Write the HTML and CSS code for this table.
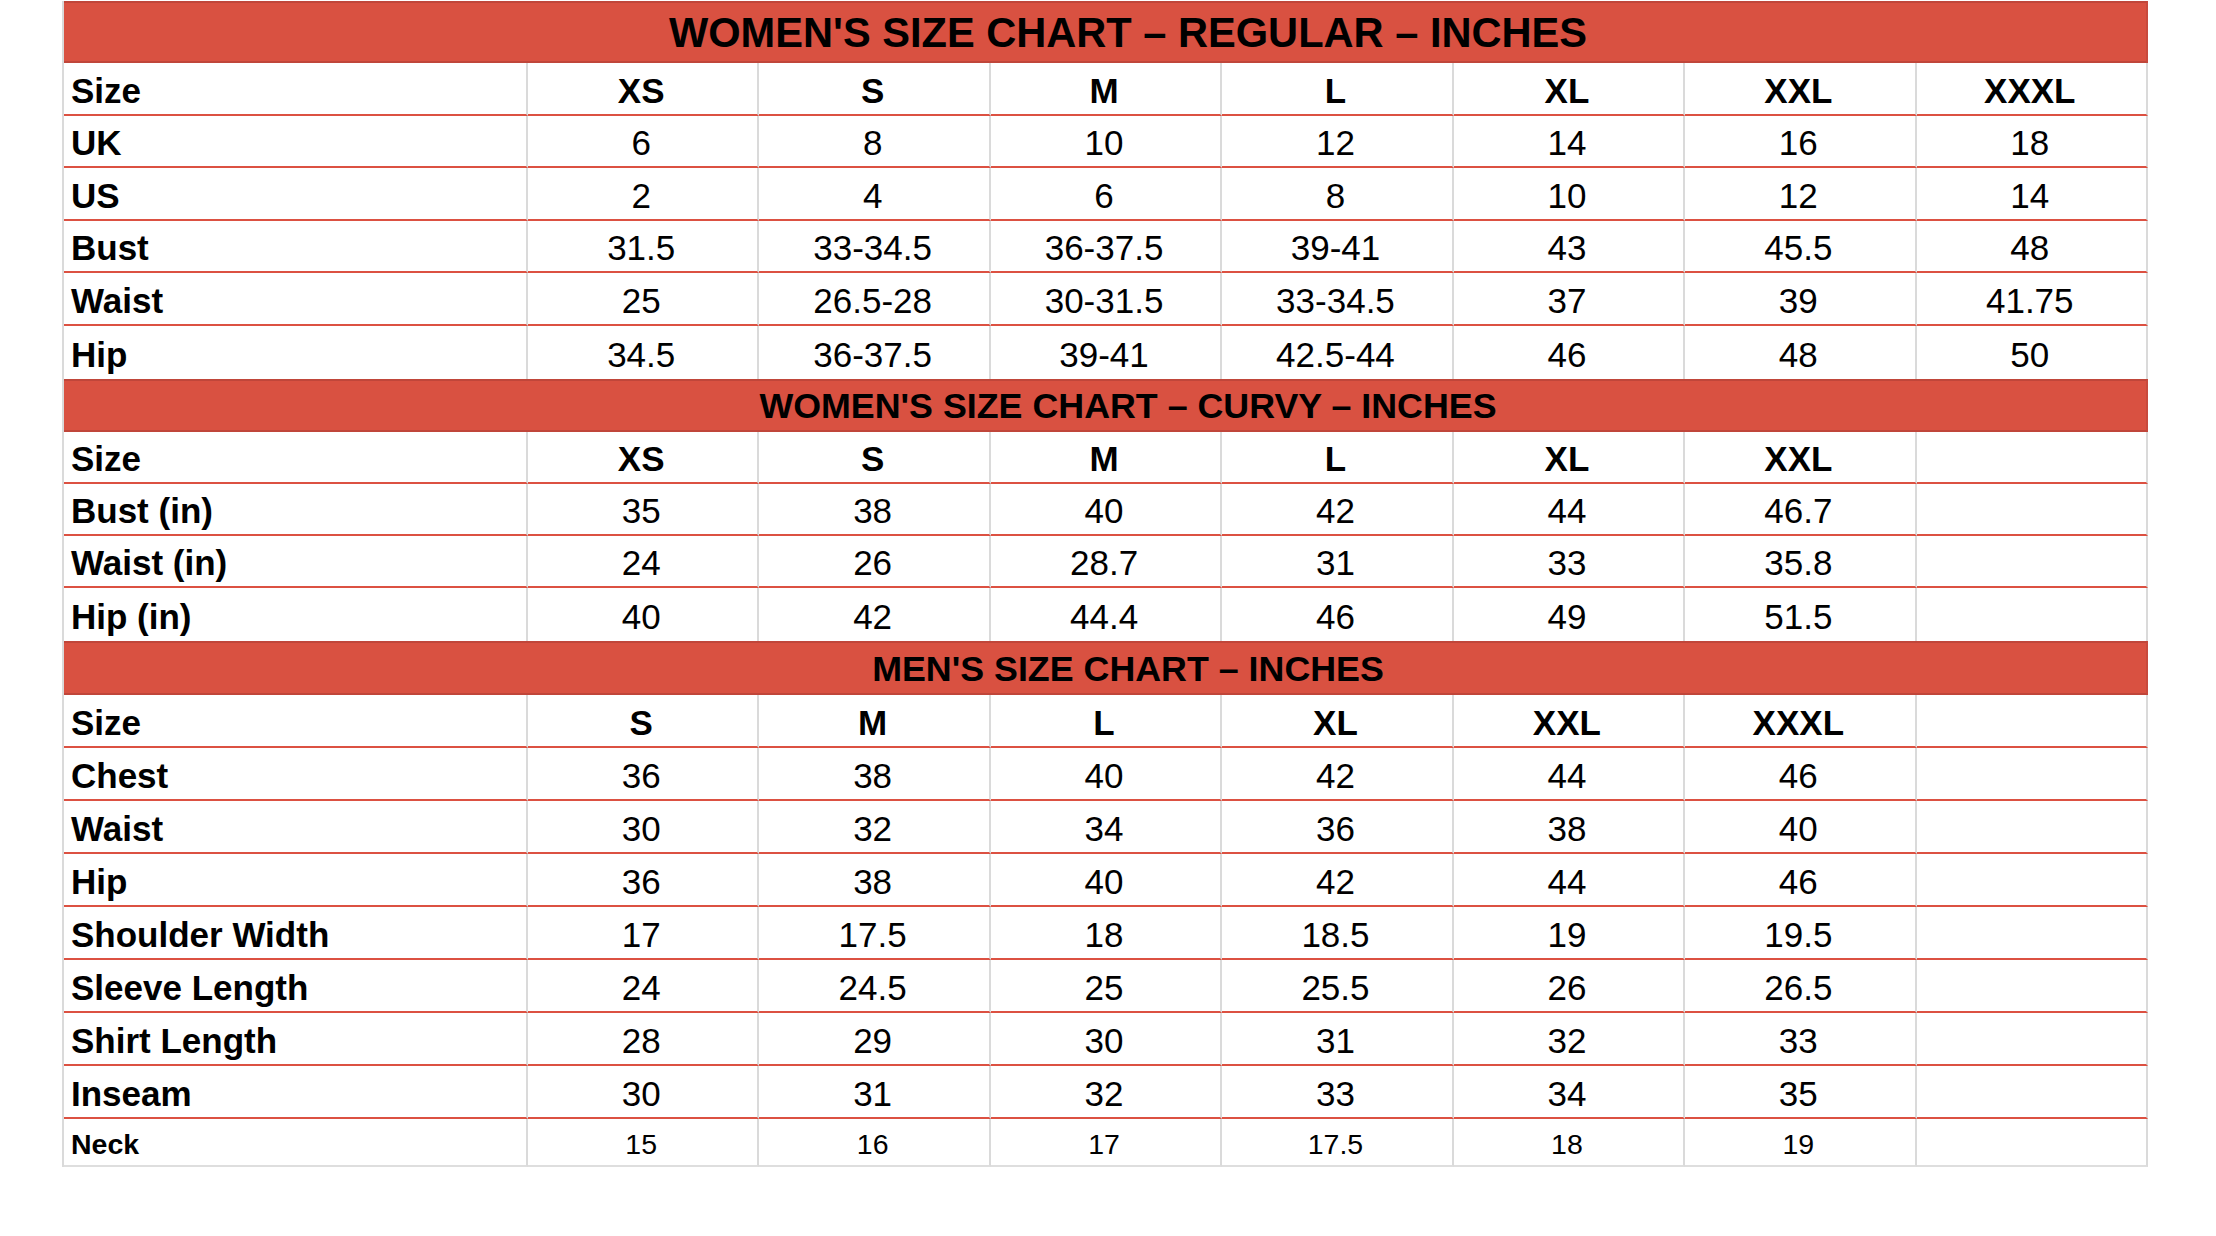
FILE: index.html
```html
<!DOCTYPE html>
<html lang="en">
<head>
<meta charset="utf-8">
<title>Size Chart</title>
<link rel="stylesheet" href="styles.css">
</head>
<body>
<div class="page">
<table class="chart">
  <colgroup>
    <col class="c-label"><col><col><col><col><col><col><col>
  </colgroup>
  <tbody>
    <tr class="head head-main"><th colspan="8">WOMEN'S SIZE CHART – REGULAR – INCHES</th></tr>
    <tr class="row sizes t"><th>Size</th><td>XS</td><td>S</td><td>M</td><td>L</td><td>XL</td><td>XXL</td><td>XXXL</td></tr>
    <tr class="row"><th>UK</th><td>6</td><td>8</td><td>10</td><td>12</td><td>14</td><td>16</td><td>18</td></tr>
    <tr class="row t"><th>US</th><td>2</td><td>4</td><td>6</td><td>8</td><td>10</td><td>12</td><td>14</td></tr>
    <tr class="row"><th>Bust</th><td>31.5</td><td>33-34.5</td><td>36-37.5</td><td>39-41</td><td>43</td><td>45.5</td><td>48</td></tr>
    <tr class="row t"><th>Waist</th><td>25</td><td>26.5-28</td><td>30-31.5</td><td>33-34.5</td><td>37</td><td>39</td><td>41.75</td></tr>
    <tr class="row t last-before-head"><th>Hip</th><td>34.5</td><td>36-37.5</td><td>39-41</td><td>42.5-44</td><td>46</td><td>48</td><td>50</td></tr>

    <tr class="head head-sub"><th colspan="8">WOMEN'S SIZE CHART – CURVY – INCHES</th></tr>
    <tr class="row sizes"><th>Size</th><td>XS</td><td>S</td><td>M</td><td>L</td><td>XL</td><td>XXL</td><td></td></tr>
    <tr class="row"><th>Bust (in)</th><td>35</td><td>38</td><td>40</td><td>42</td><td>44</td><td>46.7</td><td></td></tr>
    <tr class="row"><th>Waist (in)</th><td>24</td><td>26</td><td>28.7</td><td>31</td><td>33</td><td>35.8</td><td></td></tr>
    <tr class="row t last-before-head"><th>Hip (in)</th><td>40</td><td>42</td><td>44.4</td><td>46</td><td>49</td><td>51.5</td><td></td></tr>

    <tr class="head head-sub head-men"><th colspan="8">MEN'S SIZE CHART – INCHES</th></tr>
    <tr class="row sizes t"><th>Size</th><td>S</td><td>M</td><td>L</td><td>XL</td><td>XXL</td><td>XXXL</td><td></td></tr>
    <tr class="row t"><th>Chest</th><td>36</td><td>38</td><td>40</td><td>42</td><td>44</td><td>46</td><td></td></tr>
    <tr class="row t"><th>Waist</th><td>30</td><td>32</td><td>34</td><td>36</td><td>38</td><td>40</td><td></td></tr>
    <tr class="row t"><th>Hip</th><td>36</td><td>38</td><td>40</td><td>42</td><td>44</td><td>46</td><td></td></tr>
    <tr class="row t"><th>Shoulder Width</th><td>17</td><td>17.5</td><td>18</td><td>18.5</td><td>19</td><td>19.5</td><td></td></tr>
    <tr class="row t"><th>Sleeve Length</th><td>24</td><td>24.5</td><td>25</td><td>25.5</td><td>26</td><td>26.5</td><td></td></tr>
    <tr class="row t"><th>Shirt Length</th><td>28</td><td>29</td><td>30</td><td>31</td><td>32</td><td>33</td><td></td></tr>
    <tr class="row t"><th>Inseam</th><td>30</td><td>31</td><td>32</td><td>33</td><td>34</td><td>35</td><td></td></tr>
    <tr class="row row-small"><th>Neck</th><td>15</td><td>16</td><td>17</td><td>17.5</td><td>18</td><td>19</td><td></td></tr>
  </tbody>
</table>
</div>
</body>
</html>
```

FILE: styles.css
```css
html, body {
  margin: 0;
  padding: 0;
  background: #ffffff;
}

body {
  font-family: "Liberation Sans", Arial, Helvetica, sans-serif;
  color: #000000;
}

.page {
  padding: 1px 0 0 62px;
}

.chart {
  width: 2086px;
  border-collapse: separate;
  border-spacing: 0;
  table-layout: fixed;
  border-left: 2px solid #dadada;
}

.c-label {
  width: 464px;
}

.chart th,
.chart td {
  padding: 0;
  box-sizing: border-box;
  white-space: nowrap;
  overflow: hidden;
}

/* Section headers */
.head th {
  background: #d95141;
  border-top: 2px solid #c0463a;
  border-bottom: 2px solid #c0463a;
  border-right: 2px solid #c84a3d;
  text-align: center;
  font-weight: 700;
  vertical-align: middle;
  padding-left: 46px;
}

.head-main th {
  height: 62px;
  font-size: 41.6px;
  padding-top: 2px;
}

.head-sub th {
  height: 53px;
  font-size: 35.8px;
  padding-top: 2px;
}

.head-men th {
  height: 54px;
}

/* Data rows */
.row th,
.row td {
  height: 52px;
  border-bottom: 2px solid #dc5142;
  border-right: 2px solid #dadada;
  vertical-align: middle;
  font-size: 35px;
  padding-top: 4px;
}

.row.t th,
.row.t td {
  height: 53px;
}

.row.last-before-head th,
.row.last-before-head td {
  border-bottom: none;
}

.row th {
  text-align: left;
  font-weight: 700;
  padding-left: 7px;
}

.row td {
  text-align: center;
  font-weight: 400;
  padding-right: 3px;
}

.row.sizes td {
  font-weight: 700;
}

.row-small th,
.row-small td {
  height: 48px;
  font-size: 28.5px;
  border-bottom: 2px solid #dedede;
}
```
